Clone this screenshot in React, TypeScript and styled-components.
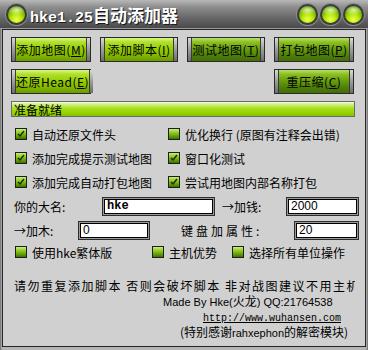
import React from 'react'
import styled, { createGlobalStyle } from 'styled-components'

const Global = createGlobalStyle`
  html, body { margin: 0; padding: 0; background: #a0a0a0; }
  * { box-sizing: border-box; }
`

const cjk = `"Noto Sans CJK SC", "Liberation Sans", sans-serif`

const Window = styled.div`
  width: 368px;
  height: 350px;
  display: flex;
  flex-direction: column;
  background: linear-gradient(to right, #6c6c6c 0px, #b4b4b4 2px, #b4b4b4 366px, #6c6c6c 368px);
  font-family: ${cjk};
  font-size: 12px;
  color: #000;
  overflow: hidden;
`

const TitleBar = styled.div`
  height: 29px;
  flex: none;
  display: flex;
  align-items: center;
  padding: 0 4px 0 6px;
  background: linear-gradient(#b8b8b8 0%, #8e8e8e 25%, #626262 70%, #4a4a4a 100%);
  border-bottom: 1px solid #9a9a9a;
`

const Orb = styled.span`
  width: 21px;
  height: 21px;
  flex: none;
  border-radius: 50%;
  border: 2px solid #3c3c3c;
  box-shadow: 0 0 0 1px #8a8a8a;
  background:
    radial-gradient(ellipse 55% 32% at 50% 24%, rgba(240, 255, 200, 0.85), rgba(255, 255, 255, 0) 100%),
    radial-gradient(circle at 50% 80%, #f2ff5a 0%, #b4e800 35%, #6cac00 65%, #2e5c00 100%);
`

const Title = styled.div`
  margin-left: 3px;
  color: #fff;
  font-weight: bold;
  font-size: 17px;
  text-shadow: 1px 1px 0 #1a1a1a;
  white-space: nowrap;
`

const Mono = styled.span`
  font-family: "Liberation Mono", monospace;
  font-size: 15px;
`

const Controls = styled.div`
  margin-left: auto;
  display: flex;
  gap: 2px;
`

const Body = styled.div`
  flex: 1;
  margin: 0 2px 3px 2px;
  border: 1px solid #262626;
  background: #d0d0d0;
  display: flex;
  flex-direction: column;
  padding-left: 8px;
`

const ButtonGrid = styled.div`
  margin-top: 7px;
  display: grid;
  grid-template-columns: 80px 78px 78px 80px;
  grid-template-rows: 25px 25px;
  column-gap: 9px;
  row-gap: 7px;
`

const Btn = styled.div<{ $col: number }>`
  grid-column: ${p => p.$col};
  display: flex;
  border: 1px solid #2a2a2a;
  background: #2a2a2a;
`

const Cap = styled.span`
  width: 4px;
  flex: none;
  background: linear-gradient(#d8d8d8, #9c9c9c 50%, #6c6c6c);
  border-left: 1px solid #3a3a3a;
  border-right: 1px solid #3a3a3a;
  &:first-child { border-left: none; }
  &:last-child { border-right: none; }
`

const Face = styled.span<{ $dark?: boolean }>`
  flex: 1;
  display: flex;
  align-items: center;
  justify-content: center;
  white-space: nowrap;
  font-size: 12px;
  letter-spacing: 0.5px;
  background: ${p =>
    p.$dark
      ? 'linear-gradient(#b8e070 0%, #8cc020 18%, #6aa010 45%, #4e8008 75%, #446c08 100%)'
      : 'linear-gradient(#d8f880 0%, #b0e030 18%, #98d000 45%, #84b800 75%, #6a9a00 100%)'};
  u { text-decoration: underline; }
`

const Status = styled.div`
  margin-top: 7px;
  width: 344px;
  height: 16px;
  border: 1px solid #6a6a6a;
  background: linear-gradient(#f4ffe0 0%, #d4f090 15%, #a8e020 45%, #94d000 80%, #88c000 100%);
  display: flex;
  align-items: center;
  padding-left: 2px;
  font-size: 12px;
`

const CheckGrid = styled.div`
  margin-top: 5px;
  display: grid;
  grid-template-columns: 153px 1fr;
  grid-auto-rows: 24px;
  padding-left: 4px;
`

const CheckRow = styled.div`
  height: 20px;
  display: grid;
  grid-template-columns: 137px 80px 1fr;
  padding-left: 4px;
  align-items: center;
`

const Check = styled.label`
  display: flex;
  align-items: center;
  gap: 5px;
  white-space: nowrap;
  font-size: 12px;
`

const Box = styled.span`
  width: 12px;
  height: 12px;
  flex: none;
  border: 1px solid #1e1e1e;
  background: linear-gradient(#c8ec80 0%, #94cc20 35%, #5e9a08 75%, #3e6e04 100%);
  display: flex;
  align-items: center;
  justify-content: center;
`

const FieldRow = styled.div<{ $cols: string }>`
  height: 24px;
  display: grid;
  grid-template-columns: ${p => p.$cols};
  align-items: center;
  padding-left: 3px;
`

const Label = styled.span<{ $spacing?: number }>`
  white-space: nowrap;
  font-size: 12px;
  letter-spacing: ${p => p.$spacing || 0}px;
`

const Input = styled.div<{ $mono?: boolean }>`
  height: 19px;
  border: 1px solid #2e2e2e;
  box-shadow: inset 0 0 0 1px #9a9a9a, inset 0 0 0 2px #000;
  background: #fff;
  display: flex;
  align-items: center;
  padding-left: 4px;
  font-family: ${p => (p.$mono ? '"Liberation Mono", monospace' : '"Liberation Sans", sans-serif')};
  font-weight: ${p => (p.$mono ? 'bold' : 'normal')};
  font-size: 12px;
`

const Notice = styled.div`
  margin-top: 17px;
  width: 344px;
  padding-left: 3px;
  height: 14px;
  line-height: 14px;
  white-space: nowrap;
  overflow: hidden;
  font-size: 12px;
  letter-spacing: 1.5px;
`

const Credit = styled.div<{ $indent: number; $h: number }>`
  padding-left: ${p => p.$indent}px;
  height: ${p => p.$h}px;
  line-height: ${p => p.$h}px;
  white-space: nowrap;
  font-size: 12px;
`

const Latin = styled.span`
  font-family: "Liberation Sans", sans-serif;
  font-size: 11px;
`

const Link = styled.span`
  font-family: "Liberation Mono", monospace;
  font-size: 10px;
  text-decoration: underline;
`

const Tick = () => (
  <svg width="8" height="8" viewBox="0 0 8 8">
    <path d="M1 4 L3 6 L7 1" stroke="#1a2a00" strokeWidth="1.4" fill="none" />
  </svg>
)

const Option = ({ label, checked }: { label: string; checked?: boolean }) => (
  <Check>
    <Box>{checked && <Tick />}</Box>
    {label}
  </Check>
)

const Button = ({ col, dark, text, k }: { col: number; dark?: boolean; text: string; k: string }) => (
  <Btn $col={col}>
    <Cap />
    <Face $dark={dark}>
      {text}(<u>{k}</u>)
    </Face>
    <Cap />
  </Btn>
)

export default function App() {
  return (
    <Window>
      <Global />
      <TitleBar>
        <Orb />
        <Title>
          <Mono>hke1.25</Mono>自动添加器
        </Title>
        <Controls>
          <Orb />
          <Orb />
          <Orb />
        </Controls>
      </TitleBar>
      <Body>
        <ButtonGrid>
          <Button col={1} text="添加地图" k="M" />
          <Button col={2} text="添加脚本" k="I" />
          <Button col={3} dark text="测试地图" k="T" />
          <Button col={4} dark text="打包地图" k="P" />
          <Button col={1} text="还原Head" k="E" />
          <Button col={4} dark text="重压缩" k="C" />
        </ButtonGrid>
        <Status>准备就绪</Status>
        <CheckGrid>
          <Option checked label="自动还原文件头" />
          <Option label="优化换行 (原图有注释会出错)" />
          <Option checked label="添加完成提示测试地图" />
          <Option checked label="窗口化测试" />
          <Option checked label="添加完成自动打包地图" />
          <Option checked label="尝试用地图内部名称打包" />
        </CheckGrid>
        <FieldRow $cols="88px 113px 7px 64px 73px">
          <Label>你的大名:</Label>
          <Input $mono>hke</Input>
          <span />
          <Label>→加钱:</Label>
          <Input>2000</Input>
        </FieldRow>
        <FieldRow $cols="64px 72px 31px 113px 65px">
          <Label>→加木:</Label>
          <Input>0</Input>
          <span />
          <Label $spacing={3}>键盘加属性:</Label>
          <Input>20</Input>
        </FieldRow>
        <CheckRow>
          <Option label="使用hke繁体版" />
          <Option label="主机优势" />
          <Option label="选择所有单位操作" />
        </CheckRow>
        <Notice>请勿重复添加脚本 否则会破坏脚本 非对战图建议不用主机</Notice>
        <Credit $indent={152} $h={15}>
          <Latin>Made By Hke(</Latin>火龙<Latin>) QQ:21764538</Latin>
        </Credit>
        <Credit $indent={192} $h={16}>
          <Link>http://www.wuhansen.com</Link>
        </Credit>
        <Credit $indent={169} $h={16}>
          (特别感谢<Latin>rahxephon</Latin>的解密模块)
        </Credit>
      </Body>
    </Window>
  )
}
